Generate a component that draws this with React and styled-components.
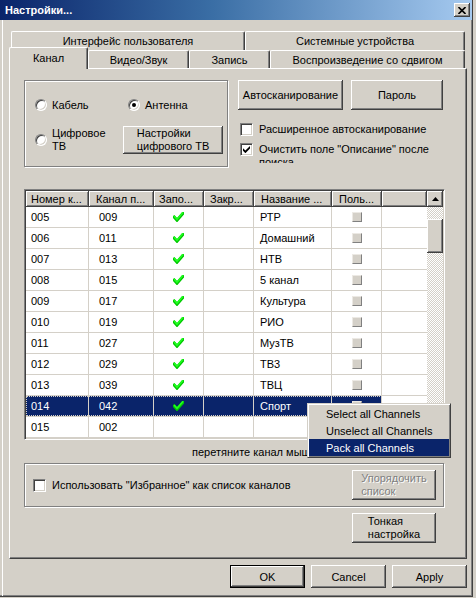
import React from 'react';
import styled, { createGlobalStyle, css } from 'styled-components';

const GlobalStyle = createGlobalStyle`
  html, body { margin: 0; padding: 0; background: #d4d0c8; }
  body { font-family: "Liberation Sans", Arial, sans-serif; font-size: 11px; color: #000; }
  * { box-sizing: border-box; }
`;

const raised = css`
  box-shadow: inset -1px -1px #404040, inset 1px 1px #fff, inset -2px -2px #808080, inset 2px 2px #d4d0c8;
`;

const Window = styled.div`
  position: relative;
  width: 473px;
  height: 597px;
  background: #d4d0c8;
  border-right: 1px solid #404040;
  border-bottom: 1px solid #404040;
  box-shadow: inset -1px -1px 0 #808080;
  display: flex;
  flex-direction: column;
  overflow: hidden;
`;

const TitleBar = styled.div`
  height: 20px;
  flex: none;
  display: flex;
  align-items: center;
  padding: 0 2px 0 5px;
  background: linear-gradient(to right, #0a246a 0%, #3a6ea5 45%, #a6caf0 100%);
  color: #fff;
  font-weight: bold;
  font-size: 11px;
`;

const CloseBtn = styled.div`
  margin-left: auto;
  width: 16px;
  height: 14px;
  background: #d4d0c8;
  ${raised};
  display: flex;
  align-items: center;
  justify-content: center;
`;

const Main = styled.div`
  flex: 1;
  margin-left: 2px;
  border-left: 1px solid #fff;
  padding: 11px 5px 0 6px;
  display: flex;
  flex-direction: column;
`;

const TabRow = styled.div`
  display: flex;
  height: ${p => p.$h}px;
  margin-left: ${p => p.$ml || 0}px;
  margin-top: ${p => p.$mt || 0}px;
  align-items: flex-end;
`;

const Tab = styled.div`
  flex: none;
  width: ${p => p.$w}px;
  height: ${p => (p.$active ? 22 : p.$h || 18)}px;
  background: #d4d0c8;
  border-top: 1px solid #fff;
  border-left: 1px solid #fff;
  border-right: 1px solid #404040;
  border-radius: 2px 2px 0 0;
  box-shadow: inset -1px 0 #808080;
  display: flex;
  align-items: center;
  justify-content: center;
  white-space: nowrap;
  ${p => p.$active && css`
    position: relative;
    z-index: 1;
    margin-bottom: -1px;
    padding-bottom: 1px;
  `}
`;

const Panel = styled.div`
  width: 458px;
  height: 491px;
  border-top: 1px solid #fff;
  border-left: 1px solid #fff;
  border-right: 1px solid #404040;
  border-bottom: 1px solid #404040;
  box-shadow: inset -1px -1px #808080;
  padding: 11px 0 0 14px;
  display: flex;
  flex-direction: column;
`;

const TopSection = styled.div`
  display: flex;
  height: 87px;
`;

const GroupBox = styled.div`
  width: ${p => p.$w}px;
  height: ${p => p.$h}px;
  border: 1px solid #808080;
  box-shadow: inset 1px 1px 0 #fff, 1px 1px 0 #fff;
`;

const RadioGrid = styled(GroupBox)`
  display: grid;
  grid-template-columns: 88px 100px;
  grid-template-rows: 14px 28px;
  row-gap: 14px;
  padding: 17px 0 0 10px;
`;

const Option = styled.label`
  display: flex;
  align-items: center;
  gap: 5px;
  padding-left: ${p => p.$pl || 0}px;
  line-height: 13px;
`;

const RadioCircle = styled.span`
  flex: none;
  width: 12px;
  height: 12px;
  border-radius: 50%;
  background: #fff;
  border: 1px solid;
  border-color: #808080 #fff #fff #808080;
  box-shadow: inset 1px 1px #404040, inset -1px -1px #d4d0c8;
  display: flex;
  align-items: center;
  justify-content: center;
  &::after {
    content: '';
    width: 4px;
    height: 4px;
    border-radius: 50%;
    background: ${p => (p.$on ? '#000' : 'transparent')};
  }
`;

const Button = styled.div`
  flex: none;
  width: ${p => p.$w}px;
  height: ${p => p.$h || 23}px;
  background: #d4d0c8;
  ${raised};
  display: flex;
  align-items: center;
  justify-content: center;
  color: ${p => (p.$disabled ? '#808080' : '#000')};
  text-shadow: ${p => (p.$disabled ? '1px 1px 0 #fff' : 'none')};
  ${p => p.$default && css`
    border: 1px solid #000;
  `}
  ${p => p.$ml !== undefined && css`margin-left: ${p.$ml}px;`}
`;

const BtnText = styled.span`
  display: inline-block;
  text-align: left;
  line-height: 13px;
  white-space: nowrap;
`;

const RightCol = styled.div`
  margin-left: 10px;
  width: 206px;
  display: flex;
  flex-direction: column;
`;

const BtnRow = styled.div`
  display: flex;
  gap: ${p => p.$gap || 8}px;
  justify-content: ${p => p.$justify || 'flex-start'};
  margin-top: ${p => p.$mt || 0}px;
`;

const CheckRow = styled.div`
  display: flex;
  align-items: flex-start;
  gap: 6px;
  margin-top: ${p => p.$mt || 0}px;
  margin-left: ${p => p.$ml || 0}px;
  height: ${p => p.$h || 13}px;
  overflow: hidden;
  line-height: 13px;
`;

const CheckBoxBox = styled.span`
  flex: none;
  width: 13px;
  height: 13px;
  background: #fff;
  border: 1px solid;
  border-color: #808080 #fff #fff #808080;
  box-shadow: inset 1px 1px #404040, inset -1px -1px #d4d0c8;
  display: flex;
  align-items: center;
  justify-content: center;
`;

const CheckLabel = styled.span`
  width: ${p => (p.$w ? p.$w + 'px' : 'auto')};
`;

const Table = styled.div`
  margin-top: 22px;
  width: 421px;
  height: 251px;
  border: 1px solid;
  border-color: #808080 #fff #fff #808080;
  box-shadow: inset 1px 1px #404040, inset -1px -1px #d4d0c8;
  padding: 1px;
  display: flex;
  background: #fff;
`;

const ListArea = styled.div`
  flex: 1;
  display: flex;
  flex-direction: column;
  overflow: hidden;
`;

const HeaderRow = styled.div`
  display: flex;
  height: 16px;
  flex: none;
`;

const HeaderCell = styled.div`
  flex: ${p => (p.$w ? 'none' : '1')};
  width: ${p => (p.$w ? p.$w + 'px' : 'auto')};
  background: #d4d0c8;
  box-shadow: inset -1px -1px #404040, inset 1px 1px #fff, inset -2px -2px #808080;
  padding-left: ${p => p.$pad || 0}px;
  display: flex;
  align-items: center;
  white-space: nowrap;
  overflow: hidden;
`;

const Row = styled.div`
  display: flex;
  height: 21px;
  flex: none;
  border-bottom: 1px solid #d4d0c8;
`;

const RowMain = styled.div`
  display: flex;
  background: ${p => (p.$sel ? '#0a246a' : 'transparent')};
  color: ${p => (p.$sel ? '#fff' : '#000')};
  outline: ${p => (p.$sel ? '1px dotted #d4d0c8' : 'none')};
  outline-offset: -1px;
`;

const Cell = styled.div`
  width: ${p => p.$w}px;
  height: 20px;
  border-right: 1px solid #d4d0c8;
  padding-left: ${p => (p.$center ? 0 : p.$pad || 0)}px;
  display: flex;
  align-items: center;
  justify-content: ${p => (p.$center ? 'center' : 'flex-start')};
  white-space: nowrap;
`;

const Filler = styled.div`
  flex: 1;
`;

const MiniBox = styled.span`
  width: 10px;
  height: 10px;
  background: #d4d0c8;
  border: 1px solid;
  border-color: #ece9e4 #808080 #808080 #ece9e4;
`;

const Scrollbar = styled.div`
  width: 16px;
  flex: none;
  display: flex;
  flex-direction: column;
`;

const ScrollBtn = styled.div`
  width: 16px;
  height: 16px;
  flex: none;
  background: #d4d0c8;
  ${raised};
  display: flex;
  align-items: center;
  justify-content: center;
`;

const Track = styled.div`
  flex: 1;
  background-color: #fff;
  background-image: repeating-conic-gradient(#d4d0c8 0 25%, #fff 0 50%);
  background-size: 2px 2px;
  padding-top: 12px;
`;

const Thumb = styled.div`
  width: 16px;
  height: 34px;
  background: #d4d0c8;
  ${raised};
`;

const Hint = styled.div`
  margin-top: 6px;
  padding-left: 168px;
  line-height: 13px;
  height: 13px;
  white-space: nowrap;
`;

const BottomGroup = styled(GroupBox)`
  margin-top: 4px;
  display: flex;
  align-items: center;
  padding: 0 7px 0 8px;
`;

const FavLabel = styled.div`
  display: flex;
  align-items: center;
  gap: 6px;
  flex: 1;
`;

const FineTune = styled(Button)`
  margin-top: 6px;
  margin-left: 328px;
`;

const DialogButtons = styled(BtnRow)`
  width: 458px;
`;

const Menu = styled.div`
  position: absolute;
  left: 307px;
  top: 403px;
  width: 144px;
  height: 55px;
  background: #d4d0c8;
  border: 1px solid;
  border-color: #d4d0c8 #404040 #404040 #d4d0c8;
  box-shadow: inset 1px 1px #fff, inset -1px -1px #808080;
  padding: 1px;
  z-index: 5;
`;

const MenuItem = styled.div`
  height: 17px;
  display: flex;
  align-items: center;
  padding-left: 17px;
  white-space: nowrap;
  background: ${p => (p.$hl ? '#0a246a' : 'transparent')};
  color: ${p => (p.$hl ? '#fff' : '#000')};
`;

const CheckMark = () => (
  <svg width="7" height="7" viewBox="0 0 7 7">
    <polygon points="0,2.2 2.4,4.6 7,0 7,2.6 2.4,7.2 0,4.8" fill="#000" />
  </svg>
);

const GreenCheck = () => (
  <svg width="11" height="10" viewBox="0 0 11 10">
    <path d="M1.2 5 L4 8.2 L10 1.3" fill="none" stroke="#00c800" strokeWidth="3" strokeLinecap="square" />
    <path d="M1.6 4.6 L4 7.2 L9.6 0.9" fill="none" stroke="#20ff20" strokeWidth="1.6" strokeLinecap="square" />
  </svg>
);

const Checkbox = ({ on }) => <CheckBoxBox>{on && <CheckMark />}</CheckBoxBox>;

const cols = [
  { w: 63, pad: 5, hpad: 5, title: 'Номер к...' },
  { w: 65, pad: 10, hpad: 7, title: 'Канал п...' },
  { w: 50, center: true, hpad: 5, title: 'Запо...' },
  { w: 50, hpad: 6, title: 'Закр...' },
  { w: 78, pad: 6, hpad: 7, title: 'Название ...' },
  { w: 50, center: true, hpad: 7, title: 'Поль...' },
];

const rows = [
  ['005', '009', true, 'РТР'],
  ['006', '011', true, 'Домашний'],
  ['007', '013', true, 'НТВ'],
  ['008', '015', true, '5 канал'],
  ['009', '017', true, 'Культура'],
  ['010', '019', true, 'РИО'],
  ['011', '027', true, 'МузТВ'],
  ['012', '029', true, 'ТВ3'],
  ['013', '039', true, 'ТВЦ'],
  ['014', '042', true, 'Спорт', true],
  ['015', '002', false, ''],
];

export default function App() {
  return (
    <>
      <GlobalStyle />
      <Window>
        <TitleBar>
          Настройки...
          <CloseBtn>
            <svg width="8" height="7" viewBox="0 0 8 7">
              <path d="M0.5 0 L7.5 7 M7.5 0 L0.5 7" stroke="#000" strokeWidth="1.6" />
            </svg>
          </CloseBtn>
        </TitleBar>
        <Main>
          <TabRow $h={19} $ml={2}>
            <Tab $w={234} $h={19}>Интерфейс пользователя</Tab>
            <Tab $w={220} $h={19}>Системные устройства</Tab>
          </TabRow>
          <TabRow $h={21} $mt={-3}>
            <Tab $w={79} $active>Канал</Tab>
            <Tab $w={101}>Видео/Звук</Tab>
            <Tab $w={81}>Запись</Tab>
            <Tab $w={195}>Воспроизведение со сдвигом</Tab>
          </TabRow>
          <Panel>
            <TopSection>
              <RadioGrid $w={204} $h={87}>
                <Option><RadioCircle />Кабель</Option>
                <Option $pl={5}><RadioCircle $on />Антенна</Option>
                <Option><RadioCircle /><span>Цифровое<br />ТВ</span></Option>
                <Button $w={100} $h={28}>
                  <BtnText>Настройки<br />цифрового ТВ</BtnText>
                </Button>
              </RadioGrid>
              <RightCol>
                <BtnRow>
                  <Button $w={105} $h={30}>Автосканирование</Button>
                  <Button $w={92} $h={30}>Пароль</Button>
                </BtnRow>
                <CheckRow $mt={13} $ml={2}>
                  <Checkbox />
                  <CheckLabel>Расширенное автосканирование</CheckLabel>
                </CheckRow>
                <CheckRow $mt={7} $ml={2} $h={20}>
                  <Checkbox on />
                  <CheckLabel $w={180}>Очистить поле "Описание" после поиска</CheckLabel>
                </CheckRow>
              </RightCol>
            </TopSection>

            <Table>
              <ListArea>
                <HeaderRow>
                  {cols.map((c, i) => (
                    <HeaderCell key={i} $w={c.w} $pad={c.hpad}>{c.title}</HeaderCell>
                  ))}
                  <HeaderCell />
                </HeaderRow>
                {rows.map((r, i) => (
                  <Row key={i}>
                    <RowMain $sel={r[4]}>
                      <Cell $w={cols[0].w} $pad={cols[0].pad}>{r[0]}</Cell>
                      <Cell $w={cols[1].w} $pad={cols[1].pad}>{r[1]}</Cell>
                      <Cell $w={cols[2].w} $center>{r[2] && <GreenCheck />}</Cell>
                      <Cell $w={cols[3].w} />
                      <Cell $w={cols[4].w} $pad={cols[4].pad}>{r[3]}</Cell>
                      <Cell $w={cols[5].w} $center>{r[3] && <MiniBox />}</Cell>
                    </RowMain>
                    <Filler />
                  </Row>
                ))}
              </ListArea>
              <Scrollbar>
                <ScrollBtn>
                  <svg width="7" height="4" viewBox="0 0 7 4"><polygon points="3.5,0 7,4 0,4" fill="#000" /></svg>
                </ScrollBtn>
                <Track><Thumb /></Track>
                <ScrollBtn>
                  <svg width="7" height="4" viewBox="0 0 7 4"><polygon points="0,0 7,0 3.5,4" fill="#000" /></svg>
                </ScrollBtn>
              </Scrollbar>
            </Table>

            <Hint>перетяните канал мышью для сортировки</Hint>

            <BottomGroup $w={420} $h={44}>
              <FavLabel>
                <Checkbox />
                Использовать "Избранное" как список каналов
              </FavLabel>
              <Button $w={84} $h={30} $disabled>
                <BtnText>Упорядочить<br />список</BtnText>
              </Button>
            </BottomGroup>

            <FineTune $w={84} $h={30}>
              <BtnText>Тонкая<br />настройка</BtnText>
            </FineTune>
          </Panel>

          <DialogButtons $gap={6} $justify="flex-end" $mt={6}>
            <Button $w={75} $h={23} $default>OK</Button>
            <Button $w={75} $h={23}>Cancel</Button>
            <Button $w={75} $h={23}>Apply</Button>
          </DialogButtons>
        </Main>

        <Menu>
          <MenuItem>Select all Channels</MenuItem>
          <MenuItem>Unselect all Channels</MenuItem>
          <MenuItem $hl>Pack all Channels</MenuItem>
        </Menu>
      </Window>
    </>
  );
}
